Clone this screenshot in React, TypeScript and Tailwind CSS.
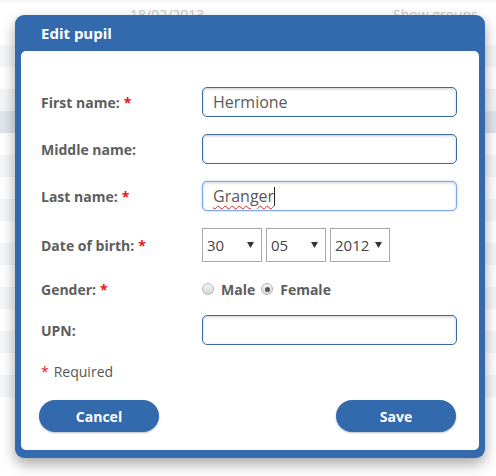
import React from "react";

const bgRows = [
  "bg-white",
  "bg-[#f5f6f8]",
  "bg-white",
  "bg-[#f3f4f6]",
  "bg-[#dfe5ec]",
  "bg-white",
  "bg-[#f5f6f8]",
  "bg-white",
  "bg-[#f5f6f8]",
  "bg-white",
  "bg-[#f5f6f8]",
  "bg-white",
  "bg-[#f5f6f8]",
  "bg-white",
  "bg-[#f5f6f8]",
  "bg-white",
  "bg-[#f5f6f8]",
];

const Req = () => <span className="text-[#e5141b] ml-[4px]">*</span>;

function Label({ children, req }: { children: React.ReactNode; req?: boolean }) {
  return (
    <div className="w-[161px] shrink-0 text-[14px] font-bold text-[#5d5d5d]">
      {children}
      {req && <Req />}
    </div>
  );
}

function TextInput({ value, focused }: { value?: React.ReactNode; focused?: boolean }) {
  return (
    <div
      className={
        focused
          ? "w-[255px] h-[30px] rounded-[5px] border border-[#7fa8e6] shadow-[inset_0_1px_3px_rgba(0,0,0,0.18),0_0_2px_rgba(80,140,230,0.6)] bg-white flex items-center pl-[10px] text-[16px] text-[#595959]"
          : "w-[255px] h-[30px] rounded-[5px] border border-[#3a6aa8] shadow-[inset_0_1px_3px_rgba(0,0,0,0.2)] bg-white flex items-center pl-[10px] text-[16px] text-[#595959]"
      }
    >
      {value}
    </div>
  );
}

function Select({ value, w }: { value: string; w: string }) {
  return (
    <div
      className={`${w} h-[34px] border border-[#aaaaaa] bg-white flex items-center justify-between pl-[4px] pr-[7px] text-[15px] text-[#444]`}
    >
      <span>{value}</span>
      <svg width="7" height="6" viewBox="0 0 7 6">
        <path d="M0 0 L7 0 L3.5 6 Z" fill="#333" />
      </svg>
    </div>
  );
}

function Radio({ checked }: { checked?: boolean }) {
  return (
    <span className="w-[12px] h-[12px] rounded-full border border-[#b5b5b5] bg-gradient-to-b from-[#f4f4f4] to-[#d8d8d8] flex items-center justify-center">
      {checked && <span className="w-[5px] h-[5px] rounded-full bg-[#555]" />}
    </span>
  );
}

export default function App() {
  return (
    <div
      className="relative w-[496px] h-[476px] overflow-hidden bg-white"
      style={{ fontFamily: '"Open Sans", "Noto Sans", sans-serif' }}
    >
      <div className="flex flex-col">
        <div className="h-[3px] bg-[#f6f7f9]" />
        <div className="h-[20px] bg-white" />
        {bgRows.map((c, i) => (
          <div key={i} className={`h-[22px] ${c}`} />
        ))}
      </div>
      <div className="absolute left-[130px] top-[4px] text-[14px] text-[#c8c8c8]">18/02/2013</div>
      <div className="absolute left-[393px] top-[4px] text-[14px] text-[#c8c8c8]">Show groups</div>

      <div className="absolute left-[15px] top-[15px] w-[470px] h-[443px] rounded-[9px] bg-[#3369ad] shadow-[0_6px_14px_rgba(0,0,0,0.35)] flex flex-col px-[6px] pb-[8px]">
        <div className="h-[36px] shrink-0 flex items-center pl-[20px] text-[15px] font-bold text-white">
          Edit pupil
        </div>
        <div className="flex-1 bg-white rounded-[5px] flex flex-col pt-[36px] pl-[20px] pr-[22px]">
          <div className="flex items-center h-[30px]">
            <Label req>First name:</Label>
            <TextInput value="Hermione" />
          </div>
          <div className="flex items-center h-[30px] mt-[17px]">
            <Label>Middle name:</Label>
            <TextInput />
          </div>
          <div className="flex items-center h-[30px] mt-[17px]">
            <Label req>Last name:</Label>
            <TextInput
              focused
              value={
                <>
                  <span className="underline decoration-wavy decoration-[#e02020] decoration-[1px] underline-offset-[3px]">
                    Granger
                  </span>
                  <span className="w-[1px] h-[19px] bg-[#222]" />
                </>
              }
            />
          </div>
          <div className="flex items-center h-[34px] mt-[17px]">
            <Label req>Date of birth:</Label>
            <div className="flex gap-[4px]">
              <Select value="30" w="w-[60px]" />
              <Select value="05" w="w-[60px]" />
              <Select value="2012" w="w-[60px]" />
            </div>
          </div>
          <div className="flex items-center h-[20px] mt-[17px]">
            <Label req>Gender:</Label>
            <div className="flex items-center text-[14px] font-bold text-[#5d5d5d]">
              <Radio />
              <span className="ml-[7px] mr-[6px]">Male</span>
              <Radio checked />
              <span className="ml-[7px]">Female</span>
            </div>
          </div>
          <div className="flex items-center h-[30px] mt-[16px]">
            <Label>UPN:</Label>
            <TextInput />
          </div>
          <div className="mt-[16px] text-[14px] text-[#555] h-[20px] flex items-center">
            <span className="text-[#e5141b] mr-[5px]">*</span>Required
          </div>
          <div className="mt-[19px] flex justify-between -ml-[2px] mr-[1px]">
            <button className="w-[120px] h-[32px] rounded-full bg-[#3369ad] text-white text-[14px] font-bold shadow-[0_1px_2px_rgba(0,0,0,0.25)]">
              Cancel
            </button>
            <button className="w-[120px] h-[32px] rounded-full bg-[#3369ad] text-white text-[14px] font-bold shadow-[0_1px_2px_rgba(0,0,0,0.25)]">
              Save
            </button>
          </div>
        </div>
      </div>
    </div>
  );
}
